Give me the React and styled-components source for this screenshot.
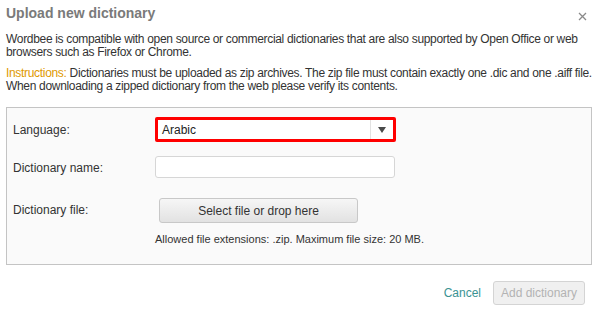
import React from 'react';
import styled, { createGlobalStyle } from 'styled-components';

const Global = createGlobalStyle`
  body {
    margin: 0;
    background: #ffffff;
    font-family: "Liberation Sans", Arial, sans-serif;
    font-size: 12px;
    color: #333333;
  }
`;

const Dialog = styled.div`
  width: 599px;
  height: 315px;
  box-sizing: border-box;
  padding: 3px 7px 0 6px;
  display: flex;
  flex-direction: column;
`;

const Header = styled.div`
  display: flex;
  justify-content: space-between;
  align-items: center;
  height: 20px;
`;

const Title = styled.h1`
  margin: 0;
  font-size: 14px;
  font-weight: bold;
  color: #7a7a7a;
`;

const Close = styled.button`
  border: none;
  background: none;
  padding: 0;
  margin: 6px 4px 0 0;
  width: 12px;
  height: 12px;
  display: flex;
  align-items: center;
  justify-content: center;
`;

const Text = styled.p`
  margin: ${(p) => p.$top || 0}px 0 0 0;
  line-height: 13px;
  font-size: 12px;
  letter-spacing: -0.32px;
  white-space: nowrap;
  color: #333333;
`;

const Hint = styled.span`
  color: #e09a00;
`;

const Fieldset = styled.div`
  margin-top: 14px;
  width: 586px;
  height: 158px;
  box-sizing: border-box;
  border: 1px solid #c4c4c4;
  background: #fafafa;
  padding: 9px 0 0 6px;
  display: grid;
  grid-template-columns: 142px 1fr;
  grid-auto-rows: min-content;
`;

const Row = styled.div`
  display: contents;
`;

const Label = styled.div`
  font-size: 12px;
  color: #333333;
  padding-top: ${(p) => p.$pt}px;
  height: ${(p) => p.$h}px;
`;

const Cell = styled.div`
  height: ${(p) => p.$h}px;
  display: flex;
  flex-direction: column;
  align-items: flex-start;
`;

const Select = styled.div`
  width: 241px;
  height: 25px;
  box-sizing: border-box;
  border: 3px solid #ff0000;
  border-radius: 2px;
  background: #ffffff;
  display: flex;
  align-items: stretch;
`;

const SelectValue = styled.div`
  flex: 1;
  padding-left: 4px;
  display: flex;
  align-items: center;
  font-size: 12px;
  color: #222222;
`;

const Arrow = styled.div`
  width: 22px;
  border-left: 1px solid #e2e2e2;
  display: flex;
  align-items: center;
  justify-content: center;
`;

const Input = styled.div`
  width: 240px;
  height: 22px;
  box-sizing: border-box;
  border: 1px solid #d6d6d6;
  border-radius: 3px;
  background: #ffffff;
`;

const FileButton = styled.button`
  margin-left: 4px;
  width: 199px;
  height: 25px;
  box-sizing: border-box;
  border: 1px solid #c8c8c8;
  border-radius: 3px;
  background: linear-gradient(#f6f6f6, #e2e2e2);
  font-family: inherit;
  font-size: 12px;
  color: #333333;
`;

const Note = styled.div`
  margin-top: 10px;
  font-size: 11px;
  color: #333333;
`;

const Footer = styled.div`
  margin-top: 16px;
  display: flex;
  justify-content: flex-end;
  align-items: center;
  gap: 12px;
  padding-right: 7px;
`;

const Cancel = styled.a`
  font-size: 12px;
  color: #3b9393;
  text-decoration: none;
`;

const AddButton = styled.button`
  width: 92px;
  height: 24px;
  box-sizing: border-box;
  border: 1px solid #d4d4d4;
  border-radius: 3px;
  background: #f0f0f0;
  font-family: inherit;
  font-size: 12px;
  color: #b3b3b3;
`;

export default function App() {
  return (
    <>
      <Global />
      <Dialog>
        <Header>
          <Title>Upload new dictionary</Title>
          <Close>
            <svg width="9" height="9" viewBox="0 0 9 9">
              <path d="M1 1L8 8M8 1L1 8" stroke="#8a8a8a" strokeWidth="1.3" />
            </svg>
          </Close>
        </Header>
        <Text $top={10}>
          Wordbee is compatible with open source or commercial dictionaries that are also supported by Open Office or web
          <br />
          browsers such as Firefox or Chrome.
        </Text>
        <Text $top={8}>
          <Hint>Instructions:</Hint> Dictionaries must be uploaded as zip archives. The zip file must contain exactly one .dic and one .aiff file.
          <br />
          When downloading a zipped dictionary from the web please verify its contents.
        </Text>
        <Fieldset>
          <Row>
            <Label $pt={6} $h={33}>Language:</Label>
            <Cell $h={33}>
              <Select>
                <SelectValue>Arabic</SelectValue>
                <Arrow>
                  <svg width="8" height="6" viewBox="0 0 8 6">
                    <path d="M0 0H8L4 6Z" fill="#4a4a4a" />
                  </svg>
                </Arrow>
              </Select>
            </Cell>
          </Row>
          <Row>
            <Label $pt={5} $h={37}>Dictionary name:</Label>
            <Cell $h={37}>
              <Input />
            </Cell>
          </Row>
          <Row>
            <Label $pt={5} $h={50}>Dictionary file:</Label>
            <Cell $h={50}>
              <FileButton>Select file or drop here</FileButton>
              <Note>Allowed file extensions: .zip. Maximum file size: 20 MB.</Note>
            </Cell>
          </Row>
        </Fieldset>
        <Footer>
          <Cancel href="#">Cancel</Cancel>
          <AddButton disabled>Add dictionary</AddButton>
        </Footer>
      </Dialog>
    </>
  );
}
